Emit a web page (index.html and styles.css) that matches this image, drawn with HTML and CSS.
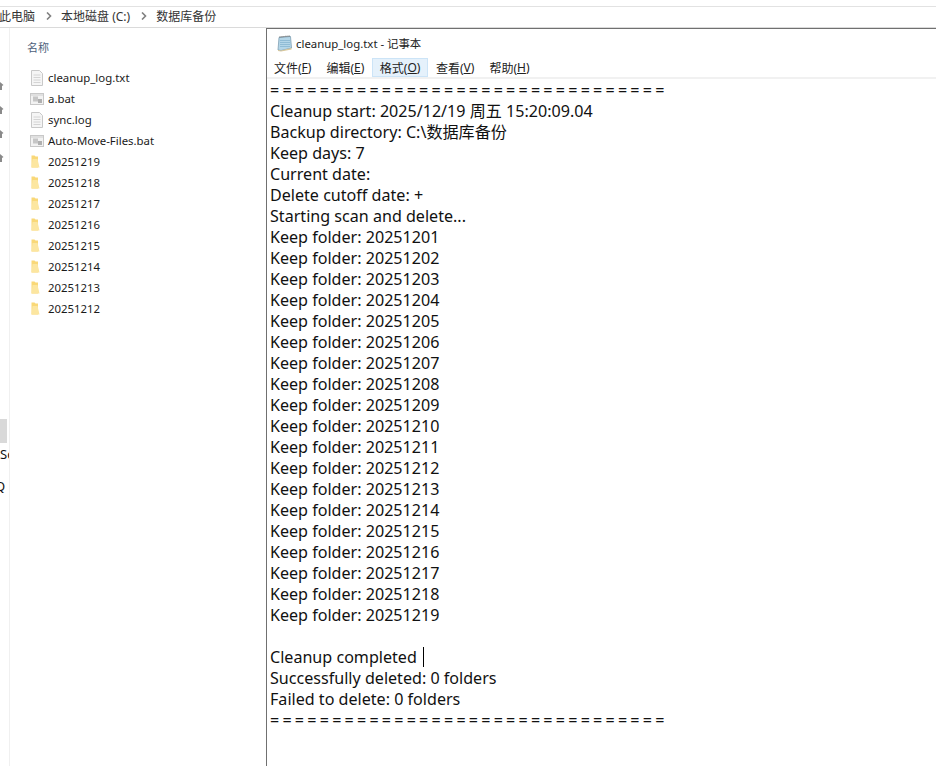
FILE: index.html
```html
<!DOCTYPE html>
<html lang="zh-CN">
<head>
<meta charset="utf-8">
<title>cleanup_log.txt - 记事本</title>
<link rel="stylesheet" href="styles.css">
</head>
<body>
<div class="crumbs">
  <span class="crumb first">此电脑</span>
  <svg class="sep" width="6" height="8" viewBox="0 0 6 8"><path d="M1 0.5 4.5 4 1 7.5" fill="none" stroke="#808080" stroke-width="1.6"/></svg>
  <span class="crumb">本地磁盘 (C:)</span>
  <svg class="sep" width="6" height="8" viewBox="0 0 6 8"><path d="M1 0.5 4.5 4 1 7.5" fill="none" stroke="#808080" stroke-width="1.6"/></svg>
  <span class="crumb">数据库备份</span>
</div>
<div class="main">
  <nav class="nav">
    <div class="pins">
      <svg class="pin" width="4" height="8" viewBox="0 0 4 8"><path d="M0 0 3.500 3 2 4V8H0Z" fill="#8a8a8a"/></svg>
      <svg class="pin" width="4" height="8" viewBox="0 0 4 8"><path d="M0 0 3.500 3 2 4V8H0Z" fill="#8a8a8a"/></svg>
      <svg class="pin" width="4" height="8" viewBox="0 0 4 8"><path d="M0 0 3.500 3 2 4V8H0Z" fill="#8a8a8a"/></svg>
      <svg class="pin" width="4" height="8" viewBox="0 0 4 8"><path d="M0 0 3.500 3 2 4V8H0Z" fill="#8a8a8a"/></svg>
    </div>
    <div class="nav-sel"></div>
    <div class="nav-s">Sc</div>
    <div class="nav-q">Q</div>
  </nav>
  <section class="files">
    <div class="col-head">名称</div>
    <ul class="list">
      <li><svg class="ic" width="14" height="16" viewBox="0 0 14 16"><path d="M1.500 .5H9.500L12.500 3.500V15.500H1.500Z" fill="#f5f5f5" stroke="#c8c8c8"/><path d="M3.500 5H10.500M3.500 7.500H10.500M3.500 10H10.500M3.500 12.500H10.500" stroke="#d4d4d4"/></svg><span>cleanup_log.txt</span></li>
      <li><svg class="ic" width="14" height="12" viewBox="0 0 14 12"><rect x=".5" y=".5" width="13" height="11" fill="#f2f2f2" stroke="#c8c8c8"/><rect x="1" y="1" width="12" height="2" fill="#e0e0e0"/><rect x="3" y="3.500" width="5" height="5" fill="#c6c6c6"/><rect x="8" y="6" width="4" height="4" fill="#b0b0b0"/></svg><span>a.bat</span></li>
      <li><svg class="ic" width="14" height="16" viewBox="0 0 14 16"><path d="M1.500 .5H9.500L12.500 3.500V15.500H1.500Z" fill="#f5f5f5" stroke="#c8c8c8"/><path d="M3.500 5H10.500M3.500 7.500H10.500M3.500 10H10.500M3.500 12.500H10.500" stroke="#d4d4d4"/></svg><span>sync.log</span></li>
      <li><svg class="ic" width="14" height="12" viewBox="0 0 14 12"><rect x=".5" y=".5" width="13" height="11" fill="#f2f2f2" stroke="#c8c8c8"/><rect x="1" y="1" width="12" height="2" fill="#e0e0e0"/><rect x="3" y="3.500" width="5" height="5" fill="#c6c6c6"/><rect x="8" y="6" width="4" height="4" fill="#b0b0b0"/></svg><span>Auto-Move-Files.bat</span></li>
      <li><svg class="ic" width="14" height="13" viewBox="0 0 14 13"><path d="M1.500 .5H4.500L5.500 1.500H8V12.500H1.500Z" fill="#f9d878"/><path d="M1.500 12.500 2.500 4H7.500L9.500 12.500Z" fill="#fce6a0"/></svg><span>20251219</span></li>
      <li><svg class="ic" width="14" height="13" viewBox="0 0 14 13"><path d="M1.500 .5H4.500L5.500 1.500H8V12.500H1.500Z" fill="#f9d878"/><path d="M1.500 12.500 2.500 4H7.500L9.500 12.500Z" fill="#fce6a0"/></svg><span>20251218</span></li>
      <li><svg class="ic" width="14" height="13" viewBox="0 0 14 13"><path d="M1.500 .5H4.500L5.500 1.500H8V12.500H1.500Z" fill="#f9d878"/><path d="M1.500 12.500 2.500 4H7.500L9.500 12.500Z" fill="#fce6a0"/></svg><span>20251217</span></li>
      <li><svg class="ic" width="14" height="13" viewBox="0 0 14 13"><path d="M1.500 .5H4.500L5.500 1.500H8V12.500H1.500Z" fill="#f9d878"/><path d="M1.500 12.500 2.500 4H7.500L9.500 12.500Z" fill="#fce6a0"/></svg><span>20251216</span></li>
      <li><svg class="ic" width="14" height="13" viewBox="0 0 14 13"><path d="M1.500 .5H4.500L5.500 1.500H8V12.500H1.500Z" fill="#f9d878"/><path d="M1.500 12.500 2.500 4H7.500L9.500 12.500Z" fill="#fce6a0"/></svg><span>20251215</span></li>
      <li><svg class="ic" width="14" height="13" viewBox="0 0 14 13"><path d="M1.500 .5H4.500L5.500 1.500H8V12.500H1.500Z" fill="#f9d878"/><path d="M1.500 12.500 2.500 4H7.500L9.500 12.500Z" fill="#fce6a0"/></svg><span>20251214</span></li>
      <li><svg class="ic" width="14" height="13" viewBox="0 0 14 13"><path d="M1.500 .5H4.500L5.500 1.500H8V12.500H1.500Z" fill="#f9d878"/><path d="M1.500 12.500 2.500 4H7.500L9.500 12.500Z" fill="#fce6a0"/></svg><span>20251213</span></li>
      <li><svg class="ic" width="14" height="13" viewBox="0 0 14 13"><path d="M1.500 .5H4.500L5.500 1.500H8V12.500H1.500Z" fill="#f9d878"/><path d="M1.500 12.500 2.500 4H7.500L9.500 12.500Z" fill="#fce6a0"/></svg><span>20251212</span></li>
    </ul>
  </section>
  <section class="notepad">
    <header class="titlebar">
      <svg class="np-icon" width="17" height="17" viewBox="0 0 17 17"><path d="M3 2.500 14.500 1.500 15.500 13 5 15.500 2 15Z" fill="#b4d6e8" stroke="#7d9eb3" stroke-width=".8"/><path d="M4 5.500H14M4 7.500H14M4 9.500H14M4 11.500H14" stroke="#86b5cf" stroke-width=".8"/><path d="M3.500 2 14 1" stroke="#555" stroke-width="1.200" stroke-dasharray="1 1"/><path d="M2 15 5 15.500 15.500 13 15.500 14.500 5 16.500 2 16Z" fill="#d9c79a"/></svg>
      <span class="title">cleanup_log.txt - 记事本</span>
    </header>
    <div class="menubar">
      <span class="menu">文件(<u>F</u>)</span>
      <span class="menu">编辑(<u>E</u>)</span>
      <span class="menu active">格式(<u>O</u>)</span>
      <span class="menu">查看(<u>V</u>)</span>
      <span class="menu">帮助(<u>H</u>)</span>
    </div>
    <pre class="text"><span class="rule">================================</span>
Cleanup start: 2025/12/19 周五 15:20:09.04
Backup directory: C:\数据库备份
Keep days: 7
Current date:
Delete cutoff date: +
Starting scan and delete...
Keep folder: 20251201
Keep folder: 20251202
Keep folder: 20251203
Keep folder: 20251204
Keep folder: 20251205
Keep folder: 20251206
Keep folder: 20251207
Keep folder: 20251208
Keep folder: 20251209
Keep folder: 20251210
Keep folder: 20251211
Keep folder: 20251212
Keep folder: 20251213
Keep folder: 20251214
Keep folder: 20251215
Keep folder: 20251216
Keep folder: 20251217
Keep folder: 20251218
Keep folder: 20251219

Cleanup completed <span class="caret"></span>
Successfully deleted: 0 folders
Failed to delete: 0 folders
<span class="rule">================================</span></pre>
  </section>
</div>
</body>
</html>
```
FILE: styles.css
```css
* { box-sizing: border-box; }
html, body { margin: 0; padding: 0; }
body {
  width: 936px;
  height: 766px;
  overflow: hidden;
  background: #fff;
  color: #1a1a1a;
  font-family: "Noto Sans", "Noto Sans CJK SC", sans-serif;
}
.crumbs {
  height: 22px;
  margin-top: 6px;
  padding-bottom: 2px;
  display: flex;
  align-items: center;
  overflow: hidden;
  background: #fff;
  border-top: 1px solid #e2e2e2;
  border-bottom: 1px solid #dadada;
  font-size: 12px;
  color: #333;
}
.crumb { white-space: nowrap; }
.crumb.first { margin-left: -1px; }
.sep { margin: 0 9.500px 0 10.500px; flex: none; }
.main {
  display: flex;
  height: 738px;
}
.nav {
  width: 10px;
  flex: none;
  overflow: hidden;
  border-right: 1px solid #f0f0f0;
  padding-top: 54px;
  font-size: 13px;
  color: #111;
}
.pins { display: flex; flex-direction: column; gap: 16px; }
.pin { display: block; }
.nav-sel {
  width: 7px;
  height: 24px;
  margin-top: 257px;
  background: #d9d9d9;
}
.nav-s { margin-top: 2px; height: 32px; line-height: 18px; }
.nav-q { margin-left: -5px; line-height: 18px; }
.files {
  width: 256px;
  flex: none;
  padding-left: 17px;
}
.col-head {
  margin-top: 12px;
  font-size: 11px;
  line-height: 16px;
  color: #4c607a;
}
.list {
  list-style: none;
  margin: 11px 0 0;
  padding: 0;
  font-size: 11.400px;
  color: #1a1a1a;
}
.list li {
  height: 21px;
  display: flex;
  align-items: center;
}
.ic { width: 14px; margin: 0 4px 0 3px; flex: none; }
.notepad {
  flex: 1;
  min-width: 0;
  border-left: 1px solid #707070;
  border-top: 1px solid #707070;
  display: flex;
  flex-direction: column;
}
.titlebar {
  height: 28px;
  display: flex;
  align-items: center;
  padding-left: 9px;
  gap: 3px;
  font-size: 11.400px;
  color: #222;
}
.np-icon { flex: none; }
.menubar {
  height: 22px;
  display: flex;
  align-items: stretch;
  padding: 1px 0 0;
  border-bottom: 2px solid #f1f1f1;
  font-size: 12px;
  color: #222;
}
.menu {
  display: flex;
  align-items: center;
  padding: 0 6px;
  margin-right: 1px;
  border: 1px solid transparent;
  white-space: pre;
}
.menu.active {
  background: #e5f1fb;
  border-color: #cce4f7;
  padding: 0 6.500px;
}
.menu u { text-decoration: underline; }
.text {
  margin: 0;
  padding: 1px 0 0 3px;
  font-family: "Noto Sans", "Noto Sans CJK SC", sans-serif;
  font-size: 16.100px;
  line-height: 21px;
  color: #111;
  white-space: pre;
  overflow: hidden;
}
.rule { letter-spacing: 3.220px; }
.caret {
  display: inline-block;
  width: 1px;
  height: 20px;
  margin-left: 2px;
  background: #000;
  vertical-align: -4px;
}
```
